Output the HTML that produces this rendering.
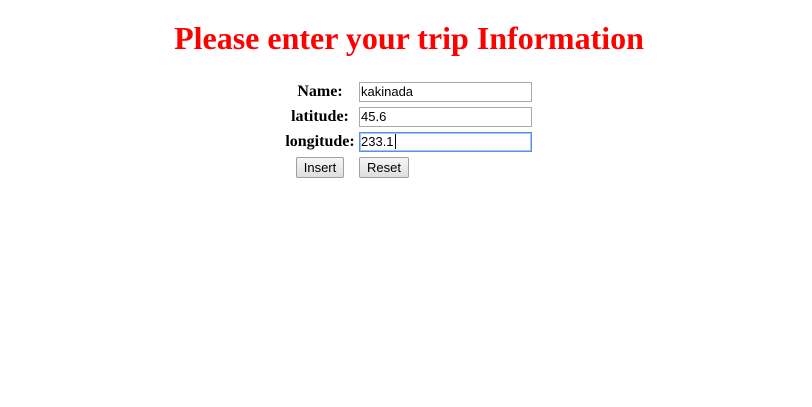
<!DOCTYPE html>
<html><head><style>
body{margin:0;width:812px;height:407px;background:#fff;position:relative;font-family:"Liberation Serif",serif;}
h1{position:absolute;left:3px;width:812px;top:19px;margin:0;text-align:center;color:#f00;font-size:32px;font-weight:bold;line-height:38px;}
.l{position:absolute;font-weight:bold;font-size:16px;line-height:20px;text-align:center;width:80px;}
.i{position:absolute;left:359px;width:170px;height:18px;border:1px solid #a9a9a9;font:13px "Liberation Sans",sans-serif;line-height:18px;padding-left:1px;box-sizing:content-box;}
.b{position:absolute;top:157px;height:19px;border:1px solid #a0a0a0;border-radius:2px;background:linear-gradient(#f6f6f6,#dedede);font:13px "Liberation Sans",sans-serif;line-height:19px;text-align:center;}
</style></head><body>
<h1>Please enter your trip Information</h1>
<div class="l" style="left:280px;top:82px">Name:</div>
<div class="l" style="left:280px;top:107px">latitude:</div>
<div class="l" style="left:280px;top:132px">longitude:</div>
<div class="i" style="top:82px">kakinada</div>
<div class="i" style="top:107px">45.6</div>
<div class="i" style="top:132px;border-color:#5b8fe6;box-shadow:0 0 0 1px #a9c3f0 inset">233.1<span style="border-left:1px solid #000;margin-left:1px"></span></div>
<div class="b" style="left:296px;width:46px">Insert</div>
<div class="b" style="left:359px;width:48px">Reset</div>
</body></html>
